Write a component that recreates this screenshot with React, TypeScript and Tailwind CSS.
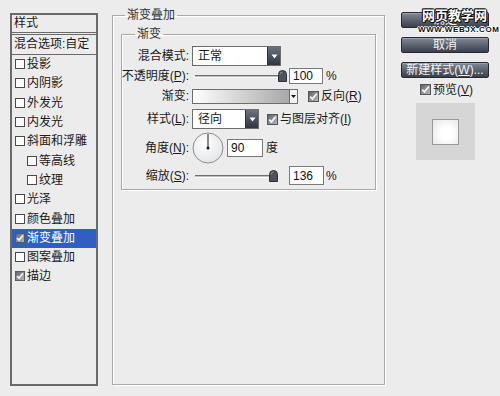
import React from "react";

function Box({ checked = false, size = 10 }: { checked?: boolean; size?: number }) {
  if (!checked) {
    return (
      <span
        className="inline-block shrink-0 border border-[#4a4a4a] bg-[#fbfbfb]"
        style={{ width: size, height: size }}
      />
    );
  }
  return (
    <svg width={size} height={size} viewBox="0 0 11 11" className="shrink-0">
      <defs>
        <linearGradient id={`cb${size}`} x1="0" y1="0" x2="1" y2="1">
          <stop offset="0" stopColor="#5c5f66" />
          <stop offset="1" stopColor="#b9bcc2" />
        </linearGradient>
      </defs>
      <rect x="0.5" y="0.5" width="10" height="10" fill={`url(#cb${size})`} stroke="#555" />
      <path d="M2.2 5.6 L4.4 7.8 L8.8 2.6" fill="none" stroke="#f2f2f2" strokeWidth="1.8" />
    </svg>
  );
}

function U({ c }: { c: string }) {
  return <span className="underline underline-offset-1">{c}</span>;
}

function DarkDrop() {
  return (
    <div className="flex h-full w-[13px] items-center justify-center border-l border-[#2a2f38] bg-gradient-to-b from-[#6b7383] to-[#2f3540]">
      <svg width="7" height="5" viewBox="0 0 7 5">
        <path d="M0.5 0.5 H6.5 L3.5 4.5 Z" fill="#fff" />
      </svg>
    </div>
  );
}

function Thumb() {
  return (
    <svg width="9" height="12" viewBox="0 0 9 12">
      <path d="M0.5 11.5 V4.5 Q0.5 0.5 4.5 0.5 Q8.5 0.5 8.5 4.5 V11.5 Z" fill="#4d525c" stroke="#2c3037" />
      <path d="M2 4.5 Q2 2 4.5 2" fill="none" stroke="#8d929b" />
    </svg>
  );
}

function Slider({ width, thumb }: { width: number; thumb: number }) {
  return (
    <div className="relative h-[14px] shrink-0" style={{ width }}>
      <div
        className="absolute left-0 top-[6px] h-[3px] border-t border-[#6f6f6f] border-b border-b-[#fdfdfd] bg-[#bdbdbd]"
        style={{ width: thumb + 6 }}
      />
      <div className="absolute top-[1px]" style={{ left: thumb }}>
        <Thumb />
      </div>
    </div>
  );
}

function Input({ value, w, h }: { value: string; w: number; h: number }) {
  return (
    <div
      className="flex shrink-0 items-center border border-[#7a7a7a] bg-white pl-[3px] text-[12px] leading-none text-[#111]"
      style={{ width: w, height: h }}
    >
      {value}
    </div>
  );
}

function Label({ children }: { children: React.ReactNode }) {
  return (
    <div className="flex w-[67px] shrink-0 justify-end whitespace-nowrap text-[12px] leading-[16px] text-[#1a1a1a]">
      {children}
    </div>
  );
}

function Button({ children, mt }: { children: React.ReactNode; mt: string }) {
  return (
    <div
      className={`${mt} flex h-[16px] w-[88px] items-center justify-center whitespace-nowrap rounded-[2px] border border-[#262a31] bg-gradient-to-b from-[#818997] to-[#3a404b] text-[12px] leading-none text-[#f2f2f2] shadow-[inset_0_1px_0_#9aa1ad]`}
    >
      {children}
    </div>
  );
}

const items: { t: string; indent?: boolean; checked?: boolean; selected?: boolean }[] = [
  { t: "投影" },
  { t: "内阴影" },
  { t: "外发光" },
  { t: "内发光" },
  { t: "斜面和浮雕" },
  { t: "等高线", indent: true },
  { t: "纹理", indent: true },
  { t: "光泽" },
  { t: "颜色叠加" },
  { t: "渐变叠加", checked: true, selected: true },
  { t: "图案叠加" },
  { t: "描边", checked: true },
];

export default function App() {
  return (
    <div className="flex h-[396px] w-[500px] items-start overflow-hidden bg-[#ececec] font-['Liberation_Sans','Noto_Sans_CJK_SC',sans-serif] text-[#1a1a1a]">
      {/* Left styles list */}
      <div className="ml-[10px] mt-[13px] h-[373px] w-[88px] shrink-0 border-2 border-[#6a6a6a]">
        <div className="h-[20px] border-b-[3px] border-double border-[#6a6a6a] pl-[2px] text-[12px] leading-[16px]">
          样式
        </div>
        <div className="h-[20px] border-b border-[#6a6a6a] pl-[2px] text-[12px] leading-[18px] whitespace-nowrap">
          混合选项:自定
        </div>
        {items.map((it) => (
          <div
            key={it.t}
            className={`flex h-[19.3px] items-center pb-[1px] text-[12px] leading-none whitespace-nowrap ${
              it.selected ? "bg-[#2f5fc5] text-white" : ""
            } ${it.indent ? "pl-[15px]" : "pl-[3px]"}`}
          >
            <Box checked={it.checked} />
            <span className="ml-[2px]">{it.t}</span>
          </div>
        ))}
      </div>

      {/* Middle fieldset */}
      <fieldset className="ml-[14px] mt-[7px] h-[378px] w-[273px] shrink-0 border border-[#a9a9a9] shadow-[inset_1px_1px_0_#ffffff,1px_1px_0_#ffffff]">
        <legend className="ml-[12px] px-[2px] text-[12px] leading-[16px] text-[#333]">渐变叠加</legend>
        <fieldset className="ml-[8px] mt-[3px] w-[255px] border border-[#a9a9a9] pb-[4px] shadow-[inset_1px_1px_0_#ffffff,1px_1px_0_#ffffff]">
          <legend className="ml-[13px] px-[2px] text-[12px] leading-[16px] text-[#333]">渐变</legend>

          {/* blend mode */}
          <div className="mt-[4px] flex h-[20px] items-center">
            <Label>混合模式:</Label>
            <div className="ml-[3px] flex h-[20px] w-[89px] items-stretch border border-[#6d6d6d] bg-white">
              <div className="flex flex-1 items-center pl-[5px] text-[12px] leading-none">正常</div>
              <DarkDrop />
            </div>
          </div>

          {/* opacity */}
          <div className="mt-[2px] flex h-[16px] items-center">
            <Label>
              不透明度(<U c="P" />):
            </Label>
            <div className="ml-[6px]">
              <Slider width={94} thumb={83} />
            </div>
            <Input value="100" w={34} h={16} />
            <span className="ml-[3px] text-[12px] leading-none">%</span>
          </div>

          {/* gradient */}
          <div className="mt-[4px] flex h-[16px] items-center">
            <Label>渐变:</Label>
            <div className="ml-[3px] flex h-[15px] w-[106px] items-stretch border border-[#6d6d6d]">
              <div className="flex-1 bg-gradient-to-r from-white to-[#a9a9a9]" />
              <div className="flex w-[8px] items-center justify-center border-l border-[#6d6d6d] bg-[#f3f3f3]">
                <svg width="5" height="3" viewBox="0 0 5 3">
                  <path d="M0 0 H5 L2.5 3 Z" fill="#111" />
                </svg>
              </div>
            </div>
            <div className="ml-[10px]">
              <Box checked size={11} />
            </div>
            <span className="ml-[2px] text-[12px] leading-none">
              反向(<U c="R" />)
            </span>
          </div>

          {/* style */}
          <div className="mt-[5px] flex h-[20px] items-center">
            <Label>
              样式(<U c="L" />):
            </Label>
            <div className="ml-[3px] flex h-[20px] w-[67px] items-stretch border border-[#6d6d6d] bg-white">
              <div className="flex flex-1 items-center pl-[5px] text-[12px] leading-none">径向</div>
              <DarkDrop />
            </div>
            <div className="ml-[8px]">
              <Box checked size={11} />
            </div>
            <span className="ml-[2px] text-[12px] leading-none whitespace-nowrap">
              与图层对齐(<U c="I" />)
            </span>
          </div>

          {/* angle */}
          <div className="mt-[3px] flex h-[31px] items-center">
            <Label>
              角度(<U c="N" />):
            </Label>
            <div className="ml-[3px]">
              <svg width="32" height="32" viewBox="0 0 32 32">
                <defs>
                  <radialGradient id="dial" cx="0.4" cy="0.35" r="0.7">
                    <stop offset="0" stopColor="#ffffff" />
                    <stop offset="1" stopColor="#e2e4e8" />
                  </radialGradient>
                </defs>
                <circle cx="16" cy="16" r="15" fill="url(#dial)" stroke="#8a8d94" strokeWidth="1" />
                <line x1="16" y1="16" x2="16" y2="2" stroke="#1a1a1a" strokeWidth="1" />
                <circle cx="16" cy="16" r="1.5" fill="#1a1a1a" />
              </svg>
            </div>
            <div className="ml-[3px]">
              <Input value="90" w={36} h={18} />
            </div>
            <span className="ml-[3px] text-[12px] leading-none">度</span>
          </div>

          {/* scale */}
          <div className="mt-[3px] flex h-[19px] items-center">
            <Label>
              缩放(<U c="S" />):
            </Label>
            <div className="ml-[6px]">
              <Slider width={94} thumb={74} />
            </div>
            <Input value="136" w={35} h={19} />
            <span className="ml-[2px] text-[12px] leading-none">%</span>
          </div>
        </fieldset>
      </fieldset>

      {/* Right buttons */}
      <div className="relative ml-[16px] w-[90px] shrink-0">
        <Button mt="mt-[12px]">确定</Button>
        <Button mt="mt-[9px]">取消</Button>
        <Button mt="mt-[9px]">
          新建样式(<U c="W" />)...
        </Button>
        <div className="mt-[4px] flex h-[15px] items-center pl-[19px]">
          <Box checked size={11} />
          <span className="ml-[2px] text-[12px] leading-none whitespace-nowrap">
            预览(<U c="V" />)
          </span>
        </div>
        <div className="ml-[15px] mt-[6px] flex h-[57px] w-[59px] items-center justify-center bg-[#d6d6d6]">
          <div className="h-[26px] w-[27px] border border-[#999] bg-[radial-gradient(circle_at_55%_55%,#ffffff_30%,#e6e6e6_100%)]" />
        </div>

        {/* watermark */}
        <div className="absolute left-[21px] top-[8px] whitespace-nowrap text-[13px] font-bold leading-[15px] text-white [text-shadow:1px_0_0_#111,-1px_0_0_#111,0_1px_0_#111,0_-1px_0_#111,1px_1px_0_#111,-1px_-1px_0_#111]">
          网页教学网
        </div>
        <div className="absolute left-[17px] top-[25px] whitespace-nowrap text-[8px] font-bold leading-[9px] tracking-[0.6px] text-[#111] [text-shadow:1px_0_0_#fff,-1px_0_0_#fff,0_1px_0_#fff,0_-1px_0_#fff]">
          WWW.WEBJX.COM
        </div>
      </div>
    </div>
  );
}
